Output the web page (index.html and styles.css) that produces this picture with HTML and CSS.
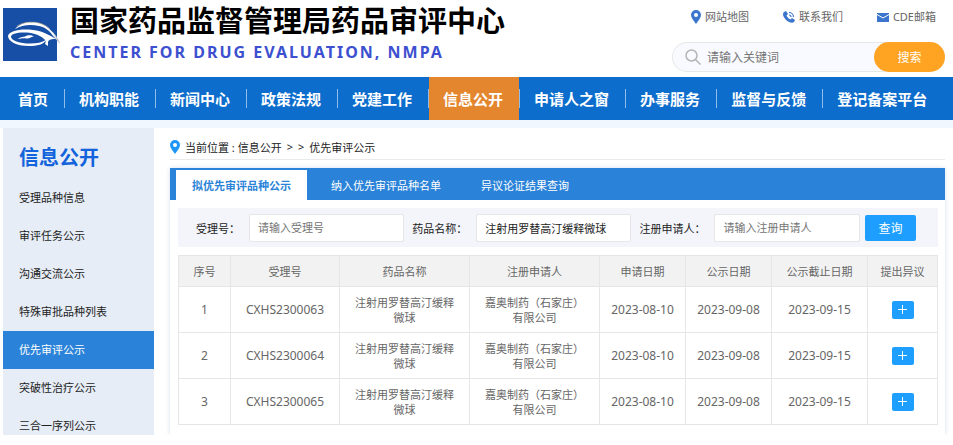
FILE: index.html
```html
<!DOCTYPE html>
<html lang="zh-CN">
<head>
    <meta charset="UTF-8">
    <meta name="viewport" content="width=device-width, initial-scale=1.0">
    <title>国家药品监督管理局药品审评中心</title>
    <link rel="stylesheet" href="styles.css">
</head>
<body>
    <header class="header">
        <a href="#" class="brand">
            <svg class="logo" viewBox="0 0 58 54" aria-hidden="true">
                <rect width="54" height="53" fill="#174fa6"/>
                <path d="M47 22C52 25 55 30 57.500 36C54 33 52 30 49 27Z" fill="#b9c2cf"/>
                <path d="M12 21C17 15 25 13.500 33 14.500C43 16 49 22 53.500 31C48 25 44 19.500 36 18C27 16 19 17 12 21Z" fill="#fff"/>
                <path d="M5 28C6 23 17 20.500 30 22C40 23 46 27 53 31C49 31 46 31 45 34L45 38L42 36C43 34 43 32 41 31C36 26 28 24.500 21 24.500C13 24.500 8 26 8 29C9 33 17 35.500 27 35.500C34 35.500 39 34.500 43 32C41 36.500 34 38 26 38C13 38 5 33 5 28Z" fill="#fff"/>
                <path d="M15 31C17 28.500 22 29.500 24 27.500C26 27 29 27 31 28.500C28 28.500 27 31 23 30.500C20 30 18 31 15 31Z" fill="#fff"/>
                <path d="M14 18C22 13 38 12 47 21" fill="none" stroke="#c9b58f" stroke-width="1" opacity=".6"/>
            </svg>
            <span class="brand-text">
                <span class="brand-cn">国家药品监督管理局药品审评中心</span>
                <span class="brand-en">CENTER FOR DRUG EVALUATION, NMPA</span>
            </span>
        </a>
        <div class="header-right">
            <div class="top-links">
                <a href="#">
                    <svg width="10" height="14" viewBox="0 0 10 14"><path fill="#3b75cd" fill-rule="evenodd" d="M5 0a5 5 0 0 1 5 5c0 3-3 6-5 9-2-3-5-6-5-9a5 5 0 0 1 5-5zM5 3a2 2 0 1 0 0 4 2 2 0 0 0 0-4z"/></svg>
                    网站地图
                </a>
                <a href="#">
                    <svg width="12" height="12" viewBox="0 0 12 12"><path fill="#3b75cd" d="M1 1l2-1 2 3-1.500 1.500c1 2 2 3 4 4L9 7l3 2-1 2c-1 1-3 1-5 0C3 9.500 1 7 0 4c0-1 0-2 1-3z"/><path d="M6 1.500c2.500 0 4.500 2 4.500 4.500M6 4c1.200 0 2 .8 2 2" fill="none" stroke="#3b75cd" stroke-width="1.200"/></svg>
                    联系我们
                </a>
                <a href="#">
                    <svg width="12" height="9" viewBox="0 0 12 9"><path fill="#3b75cd" d="M0 0h12v9H0z"/><path d="M0 1.500l6 3.500 6-3.500" fill="none" stroke="#fff" stroke-width="1"/></svg>
                    CDE邮箱
                </a>
            </div>
            <form class="search">
                <svg width="16" height="16" viewBox="0 0 16 16" fill="none" stroke="#b5b5b5" stroke-width="1.500"><circle cx="6.500" cy="6.500" r="5.500"/><path d="M10.500 10.500l5 5"/></svg>
                <input type="text" placeholder="请输入关键词" aria-label="关键词">
                <button type="submit">搜索</button>
            </form>
        </div>
    </header>

    <nav class="nav">
        <a href="#">首页</a>
        <a href="#">机构职能</a>
        <a href="#">新闻中心</a>
        <a href="#">政策法规</a>
        <a href="#">党建工作</a>
        <a href="#" class="active">信息公开</a>
        <a href="#">申请人之窗</a>
        <a href="#">办事服务</a>
        <a href="#">监督与反馈</a>
        <a href="#">登记备案平台</a>
    </nav>

    <div class="page">
        <aside class="sidebar">
            <h2>信息公开</h2>
            <a href="#">受理品种信息</a>
            <a href="#">审评任务公示</a>
            <a href="#">沟通交流公示</a>
            <a href="#">特殊审批品种列表</a>
            <a href="#" class="active">优先审评公示</a>
            <a href="#">突破性治疗公示</a>
            <a href="#">三合一序列公示</a>
        </aside>

        <main class="main">
            <div class="breadcrumb">
                <svg width="10" height="14" viewBox="0 0 10 14"><path fill="#1e96f8" fill-rule="evenodd" d="M5 0a5 5 0 0 1 5 5c0 3-3 6-5 9-2-3-5-6-5-9a5 5 0 0 1 5-5zM5 3a2 2 0 1 0 0 4 2 2 0 0 0 0-4z"/></svg>
                <span>当前位置 : <a href="#">信息公开</a></span>
                <span>&gt;</span>
                <span>&gt;</span>
                <a href="#">优先审评公示</a>
            </div>

            <section class="panel">
                <div class="tabs">
                    <button type="button" class="active">拟优先审评品种公示</button>
                    <button type="button">纳入优先审评品种名单</button>
                    <button type="button">异议论证结果查询</button>
                </div>

                <form class="filter">
                    <label for="acceptNo">受理号：</label>
                    <input type="text" id="acceptNo" placeholder="请输入受理号">
                    <label for="drugName">药品名称：</label>
                    <input type="text" id="drugName" value="注射用罗替高汀缓释微球">
                    <label for="applicant">注册申请人：</label>
                    <input type="text" id="applicant" class="short" placeholder="请输入注册申请人">
                    <button type="submit">查询</button>
                </form>

                <table class="list">
                    <colgroup>
                        <col class="col-index">
                        <col class="col-code">
                        <col class="col-name">
                        <col class="col-name">
                        <col class="col-date">
                        <col class="col-date">
                        <col class="col-end">
                        <col class="col-action">
                    </colgroup>
                    <thead>
                        <tr>
                            <th>序号</th>
                            <th>受理号</th>
                            <th>药品名称</th>
                            <th>注册申请人</th>
                            <th>申请日期</th>
                            <th>公示日期</th>
                            <th>公示截止日期</th>
                            <th>提出异议</th>
                        </tr>
                    </thead>
                    <tbody>
                        <tr>
                            <td class="num">1</td>
                            <td class="num">CXHS2300063</td>
                            <td>注射用罗替高汀缓释微球</td>
                            <td>嘉奥制药（石家庄）有限公司</td>
                            <td class="num">2023-08-10</td>
                            <td class="num">2023-09-08</td>
                            <td class="num">2023-09-15</td>
                            <td><button type="button" class="add" aria-label="提出异议"><svg width="9" height="9" viewBox="0 0 9 9"><path d="M4.500 0v9M0 4.500h9" stroke="#fff"/></svg></button></td>
                        </tr>
                        <tr>
                            <td class="num">2</td>
                            <td class="num">CXHS2300064</td>
                            <td>注射用罗替高汀缓释微球</td>
                            <td>嘉奥制药（石家庄）有限公司</td>
                            <td class="num">2023-08-10</td>
                            <td class="num">2023-09-08</td>
                            <td class="num">2023-09-15</td>
                            <td><button type="button" class="add" aria-label="提出异议"><svg width="9" height="9" viewBox="0 0 9 9"><path d="M4.500 0v9M0 4.500h9" stroke="#fff"/></svg></button></td>
                        </tr>
                        <tr>
                            <td class="num">3</td>
                            <td class="num">CXHS2300065</td>
                            <td>注射用罗替高汀缓释微球</td>
                            <td>嘉奥制药（石家庄）有限公司</td>
                            <td class="num">2023-08-10</td>
                            <td class="num">2023-09-08</td>
                            <td class="num">2023-09-15</td>
                            <td><button type="button" class="add" aria-label="提出异议"><svg width="9" height="9" viewBox="0 0 9 9"><path d="M4.500 0v9M0 4.500h9" stroke="#fff"/></svg></button></td>
                        </tr>
                    </tbody>
                </table>
            </section>
        </main>
    </div>
</body>
</html>
```
FILE: styles.css
```css
* {
    box-sizing: border-box;
}

body {
    display: flex;
    flex-direction: column;
    height: 100vh;
    margin: 0;
    padding-bottom: 10px;
    overflow: hidden;
    font-family: "Noto Sans", "Noto Sans CJK SC", sans-serif;
    font-size: 11px;
    color: #222;
    background: #fff;
}

a {
    color: inherit;
    text-decoration: none;
}

input, button {
    font-family: inherit;
    font-size: inherit;
}

button {
    padding: 0;
    border: none;
    cursor: pointer;
}

/* header */
.header {
    display: flex;
    flex: none;
    justify-content: space-between;
    height: 77px;
    padding: 0 8px 0 3px;
}

.brand {
    display: flex;
    gap: 9px;
}

.logo {
    width: 58px;
    height: 54px;
    margin-top: 8px;
}

.brand-text {
    display: flex;
    flex-direction: column;
    padding-top: 3px;
    font-weight: bold;
    white-space: nowrap;
}

.brand-cn {
    font-size: 29px;
    line-height: 36px;
    color: #000;
}

.brand-en {
    font-size: 16px;
    line-height: 26px;
    letter-spacing: 2px;
    color: #3d50cf;
}

.header-right {
    display: flex;
    flex-direction: column;
    width: 273px;
}

.top-links {
    display: flex;
    justify-content: flex-end;
    gap: 34px;
    height: 42px;
    padding: 9px 9px 0 0;
    line-height: 16px;
    color: #666;
}

.top-links a {
    display: flex;
    align-items: center;
    gap: 4px;
    height: 16px;
}

.search {
    display: flex;
    align-items: center;
    height: 30px;
    padding-left: 12px;
    border: 1px solid #e6e8e8;
    border-radius: 15px;
    border-right: none;
    background: #f9faff;
}

.search input {
    flex: 1;
    min-width: 0;
    padding: 0 6px;
    border: none;
    outline: none;
    font-size: 12px;
    background: none;
}

.search button {
    width: 71px;
    height: 30px;
    border-radius: 15px;
    font-size: 12px;
    color: #fff;
    background: #ffa422;
}

::placeholder {
    color: #757575;
}

/* main navigation */
.nav {
    display: flex;
    flex: none;
    height: 43px;
    padding-left: 4px;
    background: #0d6dcc;
}

.nav a {
    display: flex;
    align-items: center;
    padding: 0 16px 0 14px;
    font-size: 15px;
    font-weight: bold;
    color: #fff;
    white-space: nowrap;
}

.nav a:not(:last-child)::after {
    content: "";
    width: 1px;
    height: 19px;
    margin-right: -17px;
    margin-left: 16px;
    background: #8fbce8;
}

.nav a:not(:last-child) {
    margin-right: 1px;
}

.nav .active {
    background: #e3862d;
}

/* page body */
.page {
    display: flex;
    flex: 1;
    min-height: 0;
    padding-left: 3px;
    border-top: 8px solid #f1f7ff;
    overflow: hidden;
}

.sidebar {
    flex: none;
    width: 151px;
    background: #e6edf6;
}

.sidebar h2 {
    margin: 0;
    padding: 12px 16px 3px;
    font-size: 20px;
    line-height: 36px;
    color: #1263dc;
}

.sidebar a {
    display: block;
    padding: 0 16px;
    line-height: 38px;
}

.sidebar .active {
    color: #fff;
    background: #2a83d8;
}

.main {
    display: flex;
    flex: 1;
    flex-direction: column;
    min-width: 0;
    padding: 0 8px 0 16px;
}

.breadcrumb {
    display: flex;
    align-items: center;
    gap: 5px;
    height: 32px;
    padding-top: 6px;
    border-bottom: 1px solid #eaeaea;
}

.panel {
    flex: 1;
    margin-top: 8px;
    box-shadow: 0 0 5px #d5e0ee;
}

.tabs {
    display: flex;
    gap: 8px;
    height: 32px;
    padding: 2px 6px 0;
    background: #2a83d8;
}

.tabs button {
    padding: 0 16px;
    color: #fff;
    background: none;
}

.tabs .active {
    font-weight: bold;
    color: #2a83d8;
    background: #fff;
}

/* search conditions */
.filter {
    display: flex;
    align-items: center;
    height: 39px;
    margin: 8px 7px 8px 8px;
    padding: 0 22px 0 18px;
    background: #f3f5fa;
}

.filter label {
    margin-right: 9px;
    white-space: nowrap;
}

.filter input {
    flex: 156 1 0;
    min-width: 0;
    height: 28px;
    margin-right: 8px;
    padding: 0 8px;
    border: 1px solid #e6e6e6;
    border-radius: 2px;
    outline: none;
    color: #222;
    background: #fff;
}

.filter .short {
    flex-grow: 145;
    margin-right: 5px;
}

.filter button {
    flex: none;
    width: 51px;
    height: 26px;
    border-radius: 2px;
    font-size: 12px;
    color: #fff;
    background: #1e9fff;
}

/* result list */
.list {
    width: calc(100% - 15px);
    margin: 0 7px 0 8px;
    border-collapse: collapse;
    table-layout: fixed;
    color: #666;
}

.list th,
.list td {
    padding: 0 12px;
    border: 1px solid #e6e6e6;
    line-height: 15px;
    text-align: center;
}

.list th {
    height: 31px;
    padding: 0;
    font-weight: normal;
    background: #f2f2f2;
}

.list td {
    height: 46px;
}

.list .num {
    padding: 0;
    font-size: 12px;
}

/* column widths share out the full table width */
.col-index { width: 52px; }
.col-code { width: 109px; }
.col-name { width: 130px; }
.col-date { width: 86px; }
.col-end { width: 96px; }
.col-action { width: 70px; }

.add {
    display: inline-flex;
    align-items: center;
    justify-content: center;
    width: 22px;
    height: 18px;
    border-radius: 2px;
    background: #1e9fff;
    vertical-align: middle;
}
```
